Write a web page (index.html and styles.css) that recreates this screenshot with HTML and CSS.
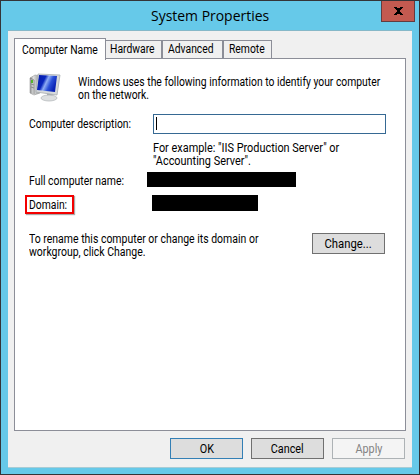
FILE: index.html
```html
<!DOCTYPE html>
<html lang="en">
<head>
<meta charset="utf-8">
<title>System Properties</title>
<link rel="stylesheet" href="styles.css">
</head>
<body>
<div class="window">
  <header class="titlebar">
    <h1>System Properties</h1>
    <button class="close" aria-label="Close"><svg width="9" height="8" viewBox="0 0 9 8" shape-rendering="crispEdges"><path d="M0 0h3v1h3V0h3v1H8v1H7v1H6v2h1v1h1v1h1v1H6V7H3v1H0V7h1V6h1V5h1V3H2V2H1V1H0z"/></svg></button>
  </header>
  <main class="dialog">
    <nav class="tabs">
      <button class="tab active"><span class="t">Computer Name</span></button>
      <button class="tab hardware"><span class="t">Hardware</span></button>
      <button class="tab advanced"><span class="t">Advanced</span></button>
      <button class="tab remote"><span class="t">Remote</span></button>
    </nav>
    <section class="panel">
      <div class="intro">
        <svg class="computer" width="32" height="29" viewBox="0 0 32 29">
          <defs>
            <linearGradient id="screen" x1="0" y1="0" x2="1" y2="0.4"><stop offset="0" stop-color="#0719a6"/><stop offset=".4" stop-color="#0826bd"/><stop offset=".55" stop-color="#8fadf4"/><stop offset=".75" stop-color="#2a50d8"/><stop offset="1" stop-color="#0a22b4"/></linearGradient>
            <linearGradient id="case" x1="0" x2="1"><stop offset="0" stop-color="#8e9090"/><stop offset=".35" stop-color="#dedfdf"/><stop offset="1" stop-color="#8b9092"/></linearGradient>
          </defs>
          <path d="M1 5 6 2l5 1v17l-6 2-4-2z" fill="url(#case)" stroke="#999" stroke-width=".6"/>
          <path d="m1 5 4 2v14M2 11l3 1M2 14l3 1" fill="none" stroke="#777" stroke-width=".7"/>
          <path d="M2 7h2v3H2z" fill="#55b52a"/>
          <path d="m18 19 6 1-1 5h-5z" fill="#a5abaf"/>
          <ellipse cx="20" cy="25" rx="8" ry="3" fill="#dddfe0" stroke="#afb3b6" stroke-width=".7"/>
          <path d="m9 1 22 1-3 20-21-3z" fill="#d6d9db" stroke="#a9afb3" stroke-width=".8"/>
          <path d="m10 2 18 1-2 16-18-2z" fill="url(#screen)"/>
        </svg>
        <p class="copy"><span class="t">Windows uses the following information to identify your computer</span><span class="t">on the network.</span></p>
      </div>
      <div class="description">
        <label for="desc"><span class="t">Computer description:</span></label>
        <div class="field"><input id="desc" aria-label="Computer description"><i class="caret"></i></div>
      </div>
      <p class="copy example"><span class="t">For example: "IIS Production Server" or</span><span class="t">"Accounting Server".</span></p>
      <div class="row fullname"><div class="fn"><span class="t">Full computer name:</span></div><b class="redacted name"></b></div>
      <div class="row domain"><div class="mark"><span class="t">Domain:</span></div><b class="redacted host"></b></div>
      <div class="rename">
        <p class="copy"><span class="t">To rename this computer or change its domain or</span><span class="t">workgroup, click Change.</span></p>
        <button class="btn change"><span class="bt">Change...</span></button>
      </div>
    </section>
    <footer class="actions">
      <button class="btn ok"><span class="bt">OK</span></button>
      <button class="btn cancel"><span class="bt">Cancel</span></button>
      <button class="btn apply" disabled><span class="bt">Apply</span></button>
    </footer>
  </main>
</div>
</body>
</html>
```
FILE: styles.css
```css
* { box-sizing: border-box; }
body { margin: 0; font: 12px/13px Roboto, "Liberation Sans", sans-serif; color: #000; }
p, h1 { margin: 0; }
button, input { font: inherit; color: inherit; padding: 0; margin: 0; border-radius: 0; outline: 0; }
.window { width: 420px; height: 475px; background: #66c9e9; border: 1px solid #343438; padding: 0 7px; }
.titlebar { height: 29px; display: flex; }
h1 { width: 118px; margin: 4px 0 0 143px; font: 15px/20px "Open Sans", sans-serif; white-space: nowrap; transform: scaleX(.93); transform-origin: left; }
.close { width: 34px; height: 21px; margin-left: auto; margin-right: -3px; background: #c35a50; border: 1px solid #633c40; border-top: 0; display: flex; align-items: center; justify-content: center; }
.dialog { width: 404px; height: 438px; background: #f0f0f0; border-top: 1px solid #86b8c8; border-bottom: 1px solid #a8ccd5; padding: 7px 6px 0; }
.tabs { height: 20px; display: flex; align-items: flex-end; }
.tab { height: 18px; background: #f0f0f0; border: 1px solid #8c8e98; border-left-width: 0; border-bottom: 0; line-height: 17px; white-space: nowrap; text-align: left; padding-left: 4px; }
.tab.active { position: relative; width: 92px; height: 22px; margin-bottom: -2px; background: #fff; border-left-width: 1px; padding-left: 7px; line-height: 16px; }
.hardware { width: 57px; border-right-width: 2px; }
.advanced { width: 61px; padding-left: 5px; border-right-width: 2px; }
.remote { width: 48px; padding-left: 5px; }
.panel { width: 392px; height: 373px; background: #fff; border: 1px solid #8c8e98; padding: 14px 19px 0 14px; }
.t { display: inline-block; white-space: nowrap; transform: scaleX(.862); transform-origin: left; }
.bt { display: inline-block; transform: scaleX(.9); }
.change .bt { transform: scaleX(.94); }
.copy .t { display: block; }
.intro { display: flex; height: 41px; }
.computer { flex: none; }
.intro .copy { width: 308px; margin: 3px 0 0 17px; }
.description { display: flex; justify-content: space-between; height: 20px; }
label { width: 120px; line-height: 20px; white-space: nowrap; }
.field { flex: none; position: relative; width: 233px; height: 20px; }
.field input { display: block; width: 233px; height: 20px; border: 1px solid #366993; background: #fff; }
.caret { position: absolute; left: 3px; top: 3px; width: 1px; height: 13px; background: #000; }
.example { margin: 8px 0 0 124px; height: 30px; }
.example .t { transform: scaleX(.908); }
.row { display: flex; white-space: nowrap; }
.redacted { background: #000; flex: none; }
.fullname { height: 23px; }
.fn { width: 118px; padding-top: 3px; }
.fn .t { transform: scaleX(.87); }
.name { width: 149px; height: 15px; }
.domain { height: 37px; }
.mark { width: 49px; height: 19px; margin-left: -4px; margin-right: 78px; padding-left: 2px; border: 2px solid #f30000; line-height: 17px; box-shadow: 1px 1px 1px #aaa; }
.host { width: 106px; height: 16px; }
.rename { display: flex; justify-content: space-between; }
.rename .copy { width: 270px; padding-top: 1px; }
.rename .t { transform: scaleX(.873); }
.rename .btn { flex: none; margin: 1px 1px 0 0; }
.btn { width: 73px; height: 21px; background: #ddd; border: 1px solid #707070; text-align: center; line-height: 18px; white-space: nowrap; }
.actions { display: flex; justify-content: flex-end; gap: 8px; padding: 7px 1px 0 0; }
.ok { border-color: #337fb5; }
.apply { background: #f4f4f4; border-color: #adb2b5; color: #838383; }
```
